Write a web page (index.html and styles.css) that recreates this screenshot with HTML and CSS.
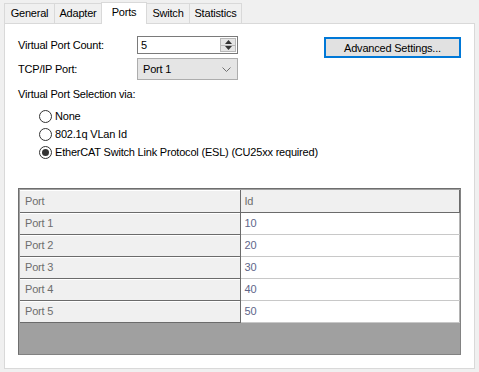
FILE: index.html
```html
<!DOCTYPE html>
<html>
<head>
    <meta charset="utf-8">
    <title>Ports</title>
    <link rel="stylesheet" href="styles.css">
</head>
<body>
    <div class="tabs">
        <span class="tab tab-general">General</span>
        <span class="tab tab-adapter">Adapter</span>
        <span class="tab tab-ports active">Ports</span>
        <span class="tab tab-switch">Switch</span>
        <span class="tab tab-stats">Statistics</span>
    </div>
    <div class="panel">
        <div class="top-row">
            <div class="form">
                <label class="form-label">Virtual Port Count:</label>
                <div class="spinner">
                    <span class="spin-value">5</span>
                    <div class="spin-buttons">
                        <span class="spin-btn"><svg width="7" height="4" viewBox="0 0 7 4"><polygon points="0,4 3.5,0 7,4" fill="#333"/></svg></span>
                        <span class="spin-btn"><svg width="7" height="4" viewBox="0 0 7 4"><polygon points="0,0 3.5,4 7,0" fill="#333"/></svg></span>
                    </div>
                </div>
                <label class="form-label">TCP/IP Port:</label>
                <div class="dropdown">
                    <span>Port 1</span>
                    <svg width="9" height="5" viewBox="0 0 9 5"><polyline points="0.5,0.5 4.5,4.5 8.5,0.5" fill="none" stroke="#707070" stroke-width="1"/></svg>
                </div>
            </div>
            <button class="adv-btn">Advanced Settings...</button>
        </div>

        <p class="group-label">Virtual Port Selection via:</p>
        <div class="radios">
            <div class="radio-row"><span class="radio"></span>None</div>
            <div class="radio-row"><span class="radio"></span>802.1q VLan Id</div>
            <div class="radio-row"><span class="radio checked"></span>EtherCAT Switch Link Protocol (ESL) (CU25xx required)</div>
        </div>

        <div class="grid-wrap">
            <table class="grid">
                <tr class="head">
                    <td class="col-port">Port</td>
                    <td class="col-id">Id</td>
                </tr>
                <tr><td class="col-port">Port 1</td><td class="col-id">10</td></tr>
                <tr><td class="col-port">Port 2</td><td class="col-id">20</td></tr>
                <tr><td class="col-port">Port 3</td><td class="col-id">30</td></tr>
                <tr><td class="col-port">Port 4</td><td class="col-id">40</td></tr>
                <tr><td class="col-port">Port 5</td><td class="col-id">50</td></tr>
            </table>
        </div>
    </div>
</body>
</html>
```

FILE: styles.css
```css
* {
    box-sizing: border-box;
}

body {
    margin: 0;
    background-color: #f0f0f0;
    font-family: "Liberation Sans", Arial, sans-serif;
    font-size: 11px;
    letter-spacing: -0.2px;
    color: #000;
}

/* tab strip */
.tabs {
    display: flex;
    align-items: flex-end;
    height: 24px;
    padding-left: 4px;
    position: relative;
    z-index: 1;
}

.tab {
    height: 20px;
    line-height: 19px;
    text-align: center;
    border: 1px solid #d9d9d9;
    border-bottom: none;
    border-right: none;
    background-color: #f0f0f0;
    margin-bottom: 1px;
}

.tab-general { width: 50px; }
.tab-adapter { width: 47px; }
.tab-switch { width: 42px; border-left: none; }
.tab-stats { width: 53px; border-right: 1px solid #d9d9d9; }

.tab.active {
    width: 46px;
    height: 22px;
    line-height: 18px;
    background-color: #fff;
    border-right: 1px solid #d9d9d9;
    margin-bottom: 0;
}

/* tab page */
.panel {
    margin: -1px 4px 0 4px;
    height: 346px;
    border: 1px solid #d9d9d9;
    background-color: #fff;
    padding: 12px 13px 0 13px;
}

.top-row {
    display: flex;
    align-items: flex-start;
}

.form {
    display: grid;
    grid-template-columns: 119px 101px;
    row-gap: 4px;
    align-items: center;
}

.form-label {
    line-height: 14px;
}

.spinner {
    display: flex;
    height: 18px;
    border: 1px solid #7a7a7a;
    background-color: #fff;
}

.spin-value {
    flex: 1;
    padding-left: 3px;
    line-height: 16px;
}

.spin-buttons {
    width: 17px;
    display: flex;
    flex-direction: column;
    padding: 1px 1px 1px 0;
}

.spin-btn {
    flex: 1;
    display: flex;
    align-items: center;
    justify-content: center;
    background-color: #e5e5e5;
    border: 1px solid #b8b8b8;
}

.spin-btn + .spin-btn {
    border-top: none;
}

.dropdown {
    height: 22px;
    display: flex;
    align-items: center;
    justify-content: space-between;
    padding: 0 6px 0 5px;
    background-color: #e5e5e5;
    border: 1px solid #adadad;
}

.adv-btn {
    margin-left: auto;
    margin-top: 1px;
    width: 137px;
    height: 21px;
    padding: 0;
    font-family: inherit;
    font-size: 11px;
    letter-spacing: -0.2px;
    color: #000;
    background-color: #e1e1e1;
    border: 2px solid #0078d7;
}

.group-label {
    margin: 7px 0 0 0;
    line-height: 14px;
}

.radios {
    margin-top: 6px;
    padding-left: 21px;
}

.radio-row {
    display: flex;
    align-items: center;
    height: 18px;
}

.radio {
    width: 13px;
    height: 13px;
    border: 1px solid #333;
    border-radius: 50%;
    margin-right: 3px;
    display: flex;
    align-items: center;
    justify-content: center;
}

.radio.checked::after {
    content: '';
    width: 7px;
    height: 7px;
    border-radius: 50%;
    background-color: #333;
}

/* data grid */
.grid-wrap {
    margin-top: 27px;
    height: 167px;
    border: 1px solid #828282;
    border-left-color: #6e6e6e;
    border-top-color: #6e6e6e;
    background-color: #a0a0a0;
    padding: 1px 0 0 1px;
}

.grid {
    width: 100%;
    border-collapse: collapse;
}

.grid td {
    height: 22px;
    padding: 0 0 0 5px;
    line-height: 14px;
}

.grid .col-port {
    width: 220px;
    background-color: #f0f0f0;
    color: #6d6d6d;
    border-right: 1px solid #6b6b6b;
    border-bottom: 1px solid #6b6b6b;
    box-shadow: inset 0 1px 0 #fff;
}

.grid .col-id {
    background-color: #fff;
    color: #60668a;
    border-right: 1px solid #b4b4b4;
    border-bottom: 1px solid #c8c8c8;
    padding-left: 4px;
}

.grid .head .col-id {
    background-color: #f0f0f0;
    color: #6d6d6d;
    border-bottom: 1px solid #6b6b6b;
    border-right: 1px solid #6b6b6b;
}
```
